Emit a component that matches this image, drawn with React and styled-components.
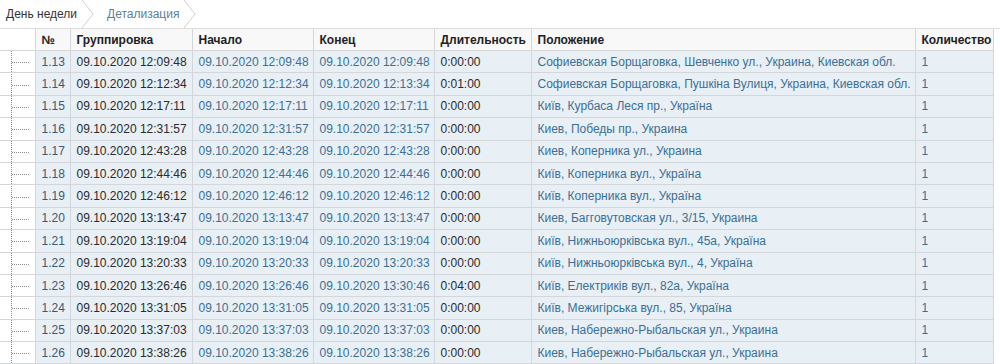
import React from 'react';
import styled, { createGlobalStyle } from 'styled-components';

const GlobalStyle = createGlobalStyle`
  body {
    margin: 0;
    background: #fff;
    font-family: "Liberation Sans", Arial, sans-serif;
    font-size: 12px;
    color: #333;
  }
`;

const Page = styled.div`
  width: 1000px;
  height: 364px;
  overflow: hidden;
  background: #fff;
`;

const Crumbs = styled.div`
  display: flex;
  align-items: stretch;
  height: 28px;
  border-bottom: 1px solid #dcdcdc;
`;

const Crumb = styled.div`
  display: flex;
  align-items: center;
  padding: 0 0 0 ${({ first }) => (first ? '6px' : '12px')};
  color: ${({ active }) => (active ? '#5b7f99' : '#333')};
  font-size: 12px;
`;

const Chevron = styled.svg`
  width: 14px;
  height: 28px;
  margin-left: 4px;
  flex: none;
`;

const Table = styled.table`
  border-collapse: collapse;
  table-layout: fixed;
  width: 993px;
  line-height: 14px;
`;

const HeadCell = styled.th`
  height: 21px;
  padding: 0 6px;
  text-align: left;
  font-weight: bold;
  font-size: 12px;
  color: #222;
  background: ${({ blank }) => (blank ? '#fff' : '#f8f8f8')};
  border: 1px solid #d6d6d6;
  border-top: none;
  border-left: ${({ blank }) => (blank ? 'none' : '1px solid #d6d6d6')};
  white-space: nowrap;
  overflow: hidden;
`;

const Row = styled.tr`
  height: 21.4px;
`;

const Cell = styled.td`
  padding: 0 6px;
  height: 21.4px;
  background: #e8eff5;
  border: 1px solid #d3d7db;
  color: ${({ link }) => (link ? '#3b6f96' : '#2b2b2b')};
  white-space: nowrap;
  overflow: hidden;
  font-size: 12px;
`;

const NumCell = styled(Cell)`
  color: #3d5a73;
`;

const TreeCell = styled.td`
  padding: 0;
  background: #fff;
  border: 1px solid #d3d7db;
  border-left: none;
`;

const TreeLines = styled.svg`
  display: block;
  width: 34px;
  height: 21px;
`;

const widths = [35, 35, 122, 121, 121, 97, 384, 78];

const rows = [
  ['1.13', '12:09:48', '12:09:48', '12:09:48', '0:00:00', 'Софиевская Борщаговка, Шевченко ул., Украина, Киевская обл.'],
  ['1.14', '12:12:34', '12:12:34', '12:13:34', '0:01:00', 'Софиевская Борщаговка, Пушкіна Вулиця, Украина, Киевская обл.'],
  ['1.15', '12:17:11', '12:17:11', '12:17:11', '0:00:00', 'Київ, Курбаса Леся пр., Україна'],
  ['1.16', '12:31:57', '12:31:57', '12:31:57', '0:00:00', 'Киев, Победы пр., Украина'],
  ['1.17', '12:43:28', '12:43:28', '12:43:28', '0:00:00', 'Киев, Коперника ул., Украина'],
  ['1.18', '12:44:46', '12:44:46', '12:44:46', '0:00:00', 'Київ, Коперника вул., Україна'],
  ['1.19', '12:46:12', '12:46:12', '12:46:12', '0:00:00', 'Київ, Коперника вул., Україна'],
  ['1.20', '13:13:47', '13:13:47', '13:13:47', '0:00:00', 'Киев, Багговутовская ул., 3/15, Украина'],
  ['1.21', '13:19:04', '13:19:04', '13:19:04', '0:00:00', 'Київ, Нижньоюрківська вул., 45а, Україна'],
  ['1.22', '13:20:33', '13:20:33', '13:20:33', '0:00:00', 'Київ, Нижньоюрківська вул., 4, Україна'],
  ['1.23', '13:26:46', '13:26:46', '13:30:46', '0:04:00', 'Київ, Електриків вул., 82а, Україна'],
  ['1.24', '13:31:05', '13:31:05', '13:31:05', '0:00:00', 'Київ, Межигірська вул., 85, Україна'],
  ['1.25', '13:37:03', '13:37:03', '13:37:03', '0:00:00', 'Киев, Набережно-Рыбальская ул., Украина'],
  ['1.26', '13:38:26', '13:38:26', '13:38:26', '0:00:00', 'Киев, Набережно-Рыбальская ул., Украина'],
];

const Arrow = () => (
  <Chevron viewBox="0 0 14 28">
    <polyline points="1,0 12,14 1,28" fill="none" stroke="#cfcfcf" strokeWidth="1" />
  </Chevron>
);

const Tree = () => (
  <TreeLines viewBox="0 0 34 21">
    <line x1="11.5" y1="0" x2="11.5" y2="21" stroke="#8a8a8a" strokeDasharray="1 1" />
    <line x1="12" y1="11.5" x2="30" y2="11.5" stroke="#8a8a8a" strokeDasharray="1 1" />
  </TreeLines>
);

const date = '09.10.2020 ';

export default function App() {
  return (
    <Page>
      <GlobalStyle />
      <Crumbs>
        <Crumb first>День недели</Crumb>
        <Arrow />
        <Crumb active>Детализация</Crumb>
        <Arrow />
      </Crumbs>
      <Table>
        <colgroup>
          {widths.map((w, i) => (
            <col key={i} style={{ width: w }} />
          ))}
        </colgroup>
        <thead>
          <tr>
            <HeadCell blank />
            <HeadCell>№</HeadCell>
            <HeadCell>Группировка</HeadCell>
            <HeadCell>Начало</HeadCell>
            <HeadCell>Конец</HeadCell>
            <HeadCell>Длительность</HeadCell>
            <HeadCell>Положение</HeadCell>
            <HeadCell>Количество</HeadCell>
          </tr>
        </thead>
        <tbody>
          {rows.map(([n, g, s, e, d, place]) => (
            <Row key={n}>
              <TreeCell>
                <Tree />
              </TreeCell>
              <NumCell>{n}</NumCell>
              <Cell>{date + g}</Cell>
              <Cell link>{date + s}</Cell>
              <Cell link>{date + e}</Cell>
              <Cell>{d}</Cell>
              <Cell link>{place}</Cell>
              <Cell link>1</Cell>
            </Row>
          ))}
        </tbody>
      </Table>
    </Page>
  );
}
